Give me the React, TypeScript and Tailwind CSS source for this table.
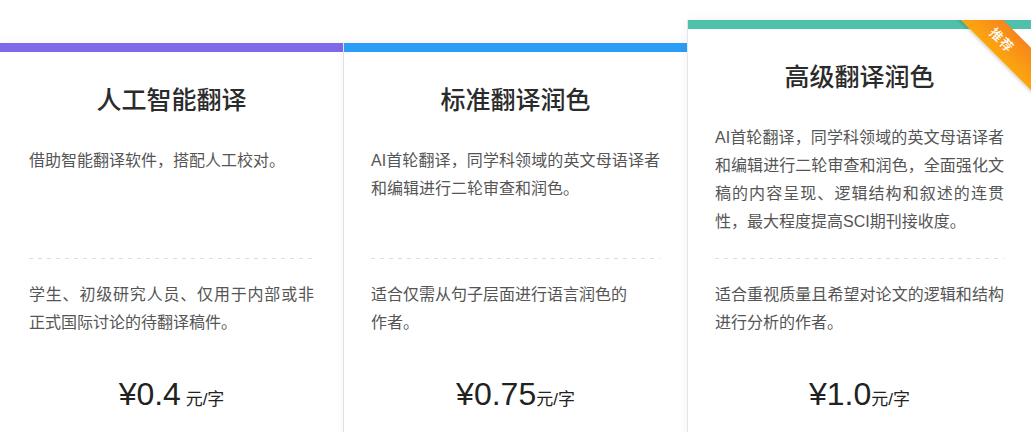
import React from "react";

type Plan = {
  title: string;
  desc: string;
  fit: React.ReactNode;
  price: string;
  gap: boolean;
  bar: string;
  pad: string;
  featured?: boolean;
};

const plans: Plan[] = [
  {
    title: "人工智能翻译",
    desc: "借助智能翻译软件，搭配人工校对。",
    fit: "学生、初级研究人员、仅用于内部或非正式国际讨论的待翻译稿件。",
    price: "¥0.4",
    gap: true,
    bar: "bg-[#7f69e8]",
    pad: "px-[29px]",
  },
  {
    title: "标准翻译润色",
    desc: "AI首轮翻译，同学科领域的英文母语译者和编辑进行二轮审查和润色。",
    fit: (
      <>
        适合仅需从句子层面进行语言润色的
        <br />
        作者。
      </>
    ),
    price: "¥0.75",
    gap: false,
    bar: "bg-[#2a9ef4]",
    pad: "px-[27px]",
  },
  {
    title: "高级翻译润色",
    desc: "AI首轮翻译，同学科领域的英文母语译者和编辑进行二轮审查和润色，全面强化文稿的内容呈现、逻辑结构和叙述的连贯性，最大程度提高SCI期刊接收度。",
    fit: "适合重视质量且希望对论文的逻辑和结构进行分析的作者。",
    price: "¥1.0",
    gap: false,
    bar: "bg-[#4fc0a9]",
    pad: "px-[27px]",
    featured: true,
  },
];

const Card: React.FC<{ plan: Plan; className: string }> = ({ plan, className }) => {
  return (
    <div
      className={`relative overflow-hidden bg-white flex flex-col shrink-0 h-[440px] shadow-[0_0_10px_rgba(0,0,0,0.06)] ${className}`}
    >
      <div className={`h-[9px] w-full ${plan.bar}`} />
      <div className="text-center text-[25px] leading-[36px] font-medium text-[#2b2b2b] mt-[30px]">
        {plan.title}
      </div>
      <div className={`${plan.pad} mt-[29px] flex flex-col`}>
        <p
          className={`text-[16px] leading-[28px] text-[#555] text-justify ${
            plan.featured ? "h-[134px]" : "h-[111px]"
          }`}
        >
          {plan.desc}
        </p>
        <div className="h-px w-full bg-[linear-gradient(to_right,#dcdcdc_50%,transparent_50%)] bg-[length:9px_1px]" />
        <p className="text-[16px] leading-[28px] text-[#555] text-justify mt-[22px] h-[93px]">
          {plan.fit}
        </p>
        <div className="text-center text-[#222] leading-[40px]">
          <span className="text-[32px]">{plan.price}</span>
          {plan.gap && <span className="text-[17px]"> </span>}
          <span className="text-[17px]">元/字</span>
        </div>
      </div>
      {plan.featured && (
        <div className="absolute left-[252px] top-[5px] w-[124px] h-[30px] rotate-45 bg-gradient-to-b from-[#f7851b] to-[#fca70d] shadow-[0_2px_3px_rgba(0,0,0,0.15)] flex items-center justify-center">
          <span className="text-white text-[13px] font-medium leading-none tracking-[1px]">推荐</span>
        </div>
      )}
    </div>
  );
};

export default function App() {
  return (
    <div
      className="w-[1031px] h-[432px] overflow-hidden bg-white flex items-start pt-[20px]"
      style={{ fontFamily: '"Liberation Sans", "Noto Sans CJK SC", sans-serif' }}
    >
      <Card plan={plans[0]} className="w-[344px] mt-[23px] border-r border-[#e6e4ec]" />
      <Card plan={plans[1]} className="w-[343px] mt-[23px]" />
      <Card plan={plans[2]} className="w-[344px] border-l border-[#e6e4ec]" />
    </div>
  );
}
